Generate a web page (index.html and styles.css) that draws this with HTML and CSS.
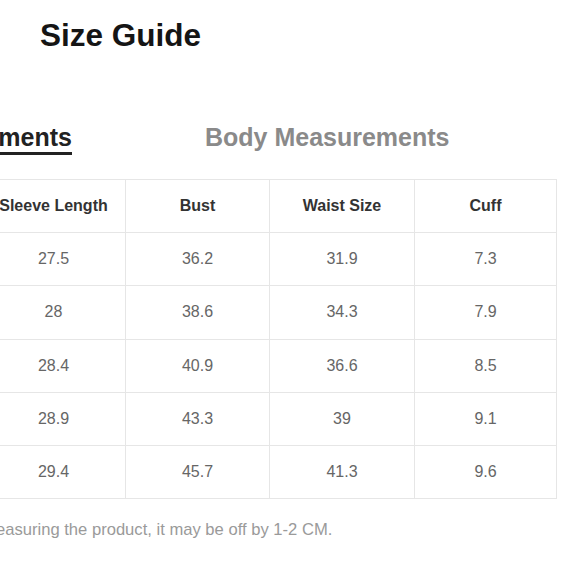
FILE: index.html
```html
<!DOCTYPE html>
<html lang="en">
<head>
<meta charset="utf-8">
<title>Size Guide</title>
<link rel="stylesheet" href="styles.css">
</head>
<body>
<div class="sheet">
  <h1 class="title">Size Guide</h1>
  <div class="tabs">
    <div class="tab active">Product Measurements</div>
    <div class="tab">Body Measurements</div>
  </div>
  <table class="size-table">
    <colgroup>
      <col class="c1"><col class="c2"><col class="c3"><col class="c4"><col class="c5"><col class="c6">
    </colgroup>
    <thead>
      <tr><th>Size</th><th>Length</th><th>Sleeve Length</th><th>Bust</th><th>Waist Size</th><th>Cuff</th></tr>
    </thead>
    <tbody>
      <tr><td>S</td><td>25.6</td><td>27.5</td><td>36.2</td><td>31.9</td><td>7.3</td></tr>
      <tr><td>M</td><td>26</td><td>28</td><td>38.6</td><td>34.3</td><td>7.9</td></tr>
      <tr><td>L</td><td>26.4</td><td>28.4</td><td>40.9</td><td>36.6</td><td>8.5</td></tr>
      <tr><td>XL</td><td>26.8</td><td>28.9</td><td>43.3</td><td>39</td><td>9.1</td></tr>
      <tr><td>XXL</td><td>27.2</td><td>29.4</td><td>45.7</td><td>41.3</td><td>9.6</td></tr>
    </tbody>
  </table>
  <p class="note">*Manually measuring the product, it may be off by 1-2 CM.</p>
</div>
</body>
</html>
```
FILE: styles.css
```css
html, body {
  margin: 0;
  padding: 0;
  background: #fff;
  overflow: hidden;
}
body {
  font-family: "Liberation Sans", Arial, sans-serif;
}
.sheet {
  width: 867px;
  margin-left: -311px;
}
.title {
  margin: 0;
  padding-top: 17px;
  padding-right: 4px;
  font-size: 31.5px;
  line-height: 36px;
  font-weight: 700;
  color: #151515;
  text-align: center;
}
.tabs {
  display: flex;
  justify-content: center;
  gap: 133px;
  margin-top: 69px;
}
.tab {
  font-size: 25px;
  line-height: 30px;
  font-weight: 700;
  color: #8a8a8a;
  border-bottom: 3px solid transparent;
}
.tab.active {
  color: #222;
  border-bottom-color: #222;
}
.size-table {
  margin-top: 24px;
  width: 867px;
  table-layout: fixed;
  border-collapse: collapse;
  font-size: 16px;
}
.c1, .c2 { width: 146px; }
.c3 { width: 144px; }
.c4 { width: 144px; }
.c5 { width: 145px; }
.c6 { width: 142px; }
.size-table th,
.size-table td {
  border: 1px solid #e6e6e6;
  height: 52.2px;
  padding: 0;
  text-align: center;
  vertical-align: middle;
}
.size-table th {
  font-weight: 700;
  color: #333;
}
.size-table td {
  color: #666;
}
.note {
  margin: 21px 0 0;
  padding-right: 8px;
  font-size: 16.6px;
  color: #9a9a9a;
  text-align: center;
}
```
